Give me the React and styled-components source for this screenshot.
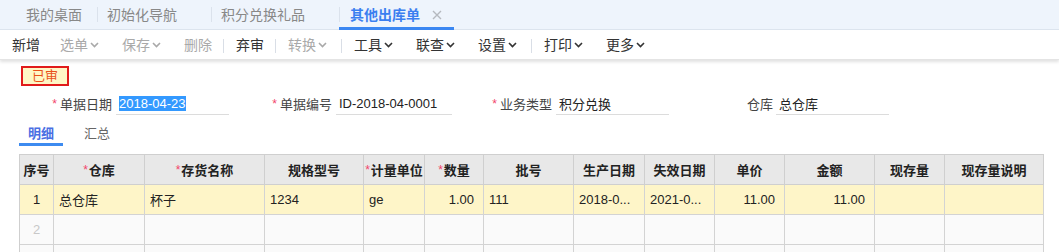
import React from "react";
import styled, { createGlobalStyle } from "styled-components";

const GlobalStyle = createGlobalStyle`
  html, body {
    margin: 0;
    padding: 0;
    background: #ffffff;
    overflow: hidden;
  }
  body {
    font-family: "Liberation Sans", "Noto Sans CJK SC", sans-serif;
    color: #333333;
  }
`;

const Page = styled.div`
  width: 1059px;
  height: 252px;
  overflow: hidden;
  background: #ffffff;
`;

/* ---------- tab bar ---------- */

const TabBar = styled.div`
  display: flex;
  align-items: stretch;
  height: 29px;
  padding-left: 16px;
  background: #eef4fc;
  border-bottom: 1px solid #dde5ef;
`;

const PageTab = styled.div`
  position: relative;
  display: flex;
  align-items: center;
  padding: ${(p) => (p.$home ? "0 15px 0 10px" : "0 34px 0 9px")};
  font-size: 14px;
  line-height: 16px;
  color: ${(p) => (p.$active ? "#3b7ff0" : "#888888")};
  font-weight: ${(p) => (p.$active ? 700 : 400)};
  white-space: nowrap;

  ${(p) =>
    p.$active &&
    `
    padding-left: 10px;
    &::after {
      content: "";
      position: absolute;
      left: -1px;
      right: 0;
      bottom: -1px;
      height: 3px;
      background: #3b87f2;
    }
  `}
`;

const TabDivider = styled.span`
  align-self: center;
  width: 1px;
  height: 15px;
  background: #dbe2ec;
`;

const CloseIcon = styled.svg`
  position: absolute;
  right: 12px;
  top: 10px;
`;

/* ---------- toolbar ---------- */

const Toolbar = styled.div`
  position: relative;
  display: flex;
  align-items: center;
  height: 29px;
  padding-left: 2px;
  background: #ffffff;
  box-shadow: 0 2px 3px rgba(0, 0, 0, 0.12);
  border-bottom: 1px solid #e4e4e4;
`;

const ToolButton = styled.div`
  display: flex;
  align-items: center;
  padding: ${(p) => (p.$menu ? "0 13px 0 10px" : "0 10px")};
  font-size: 14px;
  line-height: 16px;
  color: ${(p) => (p.$disabled ? "#a9a9a9" : "#333333")};
  white-space: nowrap;

  svg {
    margin-left: 2px;
    margin-top: 1px;
  }
`;

const ToolDivider = styled.span`
  width: 1px;
  height: 14px;
  margin: 2px 2px 0 1px;
  background: #d9dee6;
`;

const Chevron = ({ color }) => (
  <svg width="9" height="6" viewBox="0 0 9 6">
    <polyline
      points="1,1 4.5,4.5 8,1"
      fill="none"
      stroke={color}
      strokeWidth="1.6"
    />
  </svg>
);

/* ---------- header form ---------- */

const StatusRow = styled.div`
  padding: 6px 0 0 21px;
`;

const Stamp = styled.div`
  box-sizing: border-box;
  width: 48px;
  height: 20px;
  border: 2px solid #e11b1b;
  background: #fff7c6;
  color: #e8521a;
  font-size: 13px;
  line-height: 16px;
  text-align: center;
`;

const FormRow = styled.div`
  display: flex;
  margin-top: 6px;
`;

const Field = styled.div`
  display: flex;
  align-items: stretch;
`;

const FieldLabel = styled.label`
  display: flex;
  align-items: center;
  justify-content: flex-end;
  width: ${(p) => p.$width}px;
  font-size: 13px;
  color: #444444;
  white-space: nowrap;
`;

const Required = styled.span`
  color: #f2456b;
  font-size: 12px;
  margin-right: 3px;
`;

const FieldInput = styled.div`
  box-sizing: border-box;
  display: flex;
  align-items: center;
  width: ${(p) => p.$width}px;
  height: 23px;
  margin-left: ${(p) => p.$gap}px;
  padding-left: 3px;
  border-bottom: 1px solid #dcdcdc;
  font-size: 13px;
  color: #222222;
  white-space: nowrap;
`;

const Selected = styled.span`
  background: #3399ff;
  color: #ffffff;
  line-height: 15px;
`;

/* ---------- detail tabs ---------- */

const DetailTabs = styled.div`
  display: flex;
  gap: 12px;
  margin: 6px 0 8px 19px;
`;

const DetailTab = styled.div`
  box-sizing: border-box;
  height: 25px;
  padding: 0 9px;
  display: flex;
  align-items: center;
  font-size: 13px;
  font-weight: ${(p) => (p.$active ? 700 : 400)};
  color: ${(p) => (p.$active ? "#4a6fe3" : "#666666")};
  border-bottom: 3px solid ${(p) => (p.$active ? "#3d8bf0" : "transparent")};
`;

/* ---------- grid ---------- */

const columns = [
  { title: "序号", width: 34 },
  { title: "仓库", width: 91, required: true },
  { title: "存货名称", width: 120, required: true },
  { title: "规格型号", width: 99 },
  { title: "计量单位", width: 61, required: true },
  { title: "数量", width: 59, required: true },
  { title: "批号", width: 90 },
  { title: "生产日期", width: 71 },
  { title: "失效日期", width: 70 },
  { title: "单价", width: 70 },
  { title: "金额", width: 90 },
  { title: "现存量", width: 70 },
  { title: "现存量说明", width: 99 },
];

const rows = [
  [
    { v: "1", align: "center" },
    { v: "总仓库" },
    { v: "杯子" },
    { v: "1234" },
    { v: "ge" },
    { v: "1.00", align: "right" },
    { v: "111" },
    { v: "2018-0..." },
    { v: "2021-0..." },
    { v: "11.00", align: "right" },
    { v: "11.00", align: "right" },
    { v: "" },
    { v: "" },
  ],
  [{ v: "2", align: "center", muted: true }],
  [],
];

const Grid = styled.div`
  display: grid;
  grid-template-columns: ${columns.map((c) => c.width + "px").join(" ")};
  grid-auto-rows: 30px;
  width: max-content;
  margin-left: 19px;
  border-top: 1px solid #cfcfcf;
  border-left: 1px solid #cfcfcf;
`;

const HeadCell = styled.div`
  box-sizing: border-box;
  display: flex;
  align-items: center;
  justify-content: center;
  background: #e8e8e8;
  border-right: 1px solid #cfcfcf;
  border-bottom: 1px solid #cfcfcf;
  font-size: 13px;
  font-weight: 700;
  color: #222222;
  white-space: nowrap;
  overflow: hidden;
`;

const HeadStar = styled.span`
  color: #f2456b;
  font-weight: 400;
  font-size: 12px;
  margin-right: 1px;
`;

const Cell = styled.div`
  box-sizing: border-box;
  display: flex;
  align-items: center;
  justify-content: ${(p) =>
    p.$align === "center" ? "center" : p.$align === "right" ? "flex-end" : "flex-start"};
  padding: 0 ${(p) => (p.$align === "right" ? "9px" : "0")} 0
    ${(p) => (p.$align === "left" ? "5px" : "0")};
  background: ${(p) => (p.$current ? "#fef5c8" : "#fafafa")};
  border-right: 1px solid #d3d3d3;
  border-bottom: 1px solid #d3d3d3;
  font-size: 13px;
  color: ${(p) => (p.$muted ? "#c8c8c8" : "#222222")};
  white-space: nowrap;
  overflow: hidden;
`;

const pageTabs = [
  { label: "我的桌面", home: true },
  { label: "初始化导航" },
  { label: "积分兑换礼品" },
  { label: "其他出库单", active: true },
];

const tools = [
  { label: "新增" },
  { label: "选单", menu: true, disabled: true },
  { label: "保存", menu: true, disabled: true },
  { label: "删除", disabled: true },
  { divider: true },
  { label: "弃审" },
  { divider: true },
  { label: "转换", menu: true, disabled: true },
  { divider: true },
  { label: "工具", menu: true },
  { label: "联查", menu: true },
  { label: "设置", menu: true },
  { divider: true },
  { label: "打印", menu: true },
  { label: "更多", menu: true },
];

const fields = [
  { label: "单据日期", required: true, labelWidth: 112, gap: 4, inputWidth: 113, value: <Selected>2018-04-23</Selected> },
  { label: "单据编号", required: true, labelWidth: 103, gap: 4, inputWidth: 116, value: "ID-2018-04-0001" },
  { label: "业务类型", required: true, labelWidth: 100, gap: 4, inputWidth: 113, value: "积分兑换" },
  { label: "仓库", labelWidth: 104, gap: 3, inputWidth: 113, value: "总仓库" },
];

export default function App() {
  return (
    <Page>
      <GlobalStyle />
      <TabBar>
        {pageTabs.map((t, i) => (
          <React.Fragment key={t.label}>
            {i > 0 && <TabDivider />}
            <PageTab $home={t.home} $active={t.active}>
              {t.label}
              {t.active && (
                <CloseIcon width="10" height="10" viewBox="0 0 10 10">
                  <path d="M1 1 L9 9 M9 1 L1 9" stroke="#b5b9bf" strokeWidth="1.4" />
                </CloseIcon>
              )}
            </PageTab>
          </React.Fragment>
        ))}
      </TabBar>

      <Toolbar>
        {tools.map((t, i) =>
          t.divider ? (
            <ToolDivider key={i} />
          ) : (
            <ToolButton key={i} $menu={t.menu} $disabled={t.disabled}>
              {t.label}
              {t.menu && <Chevron color={t.disabled ? "#a9a9a9" : "#333333"} />}
            </ToolButton>
          )
        )}
      </Toolbar>

      <StatusRow>
        <Stamp>已审</Stamp>
      </StatusRow>

      <FormRow>
        {fields.map((f) => (
          <Field key={f.label}>
            <FieldLabel $width={f.labelWidth}>
              {f.required && <Required>*</Required>}
              {f.label}
            </FieldLabel>
            <FieldInput $width={f.inputWidth} $gap={f.gap}>
              {f.value}
            </FieldInput>
          </Field>
        ))}
      </FormRow>

      <DetailTabs>
        <DetailTab $active>明细</DetailTab>
        <DetailTab>汇总</DetailTab>
      </DetailTabs>

      <Grid>
        {columns.map((c) => (
          <HeadCell key={c.title}>
            {c.required && <HeadStar>*</HeadStar>}
            {c.title}
          </HeadCell>
        ))}
        {rows.map((r, ri) =>
          columns.map((c, ci) => {
            const cell = r[ci] || { v: "" };
            return (
              <Cell
                key={ri + "-" + ci}
                $current={ri === 0}
                $align={cell.align || "left"}
                $muted={cell.muted}
              >
                {cell.v}
              </Cell>
            );
          })
        )}
      </Grid>
    </Page>
  );
}
